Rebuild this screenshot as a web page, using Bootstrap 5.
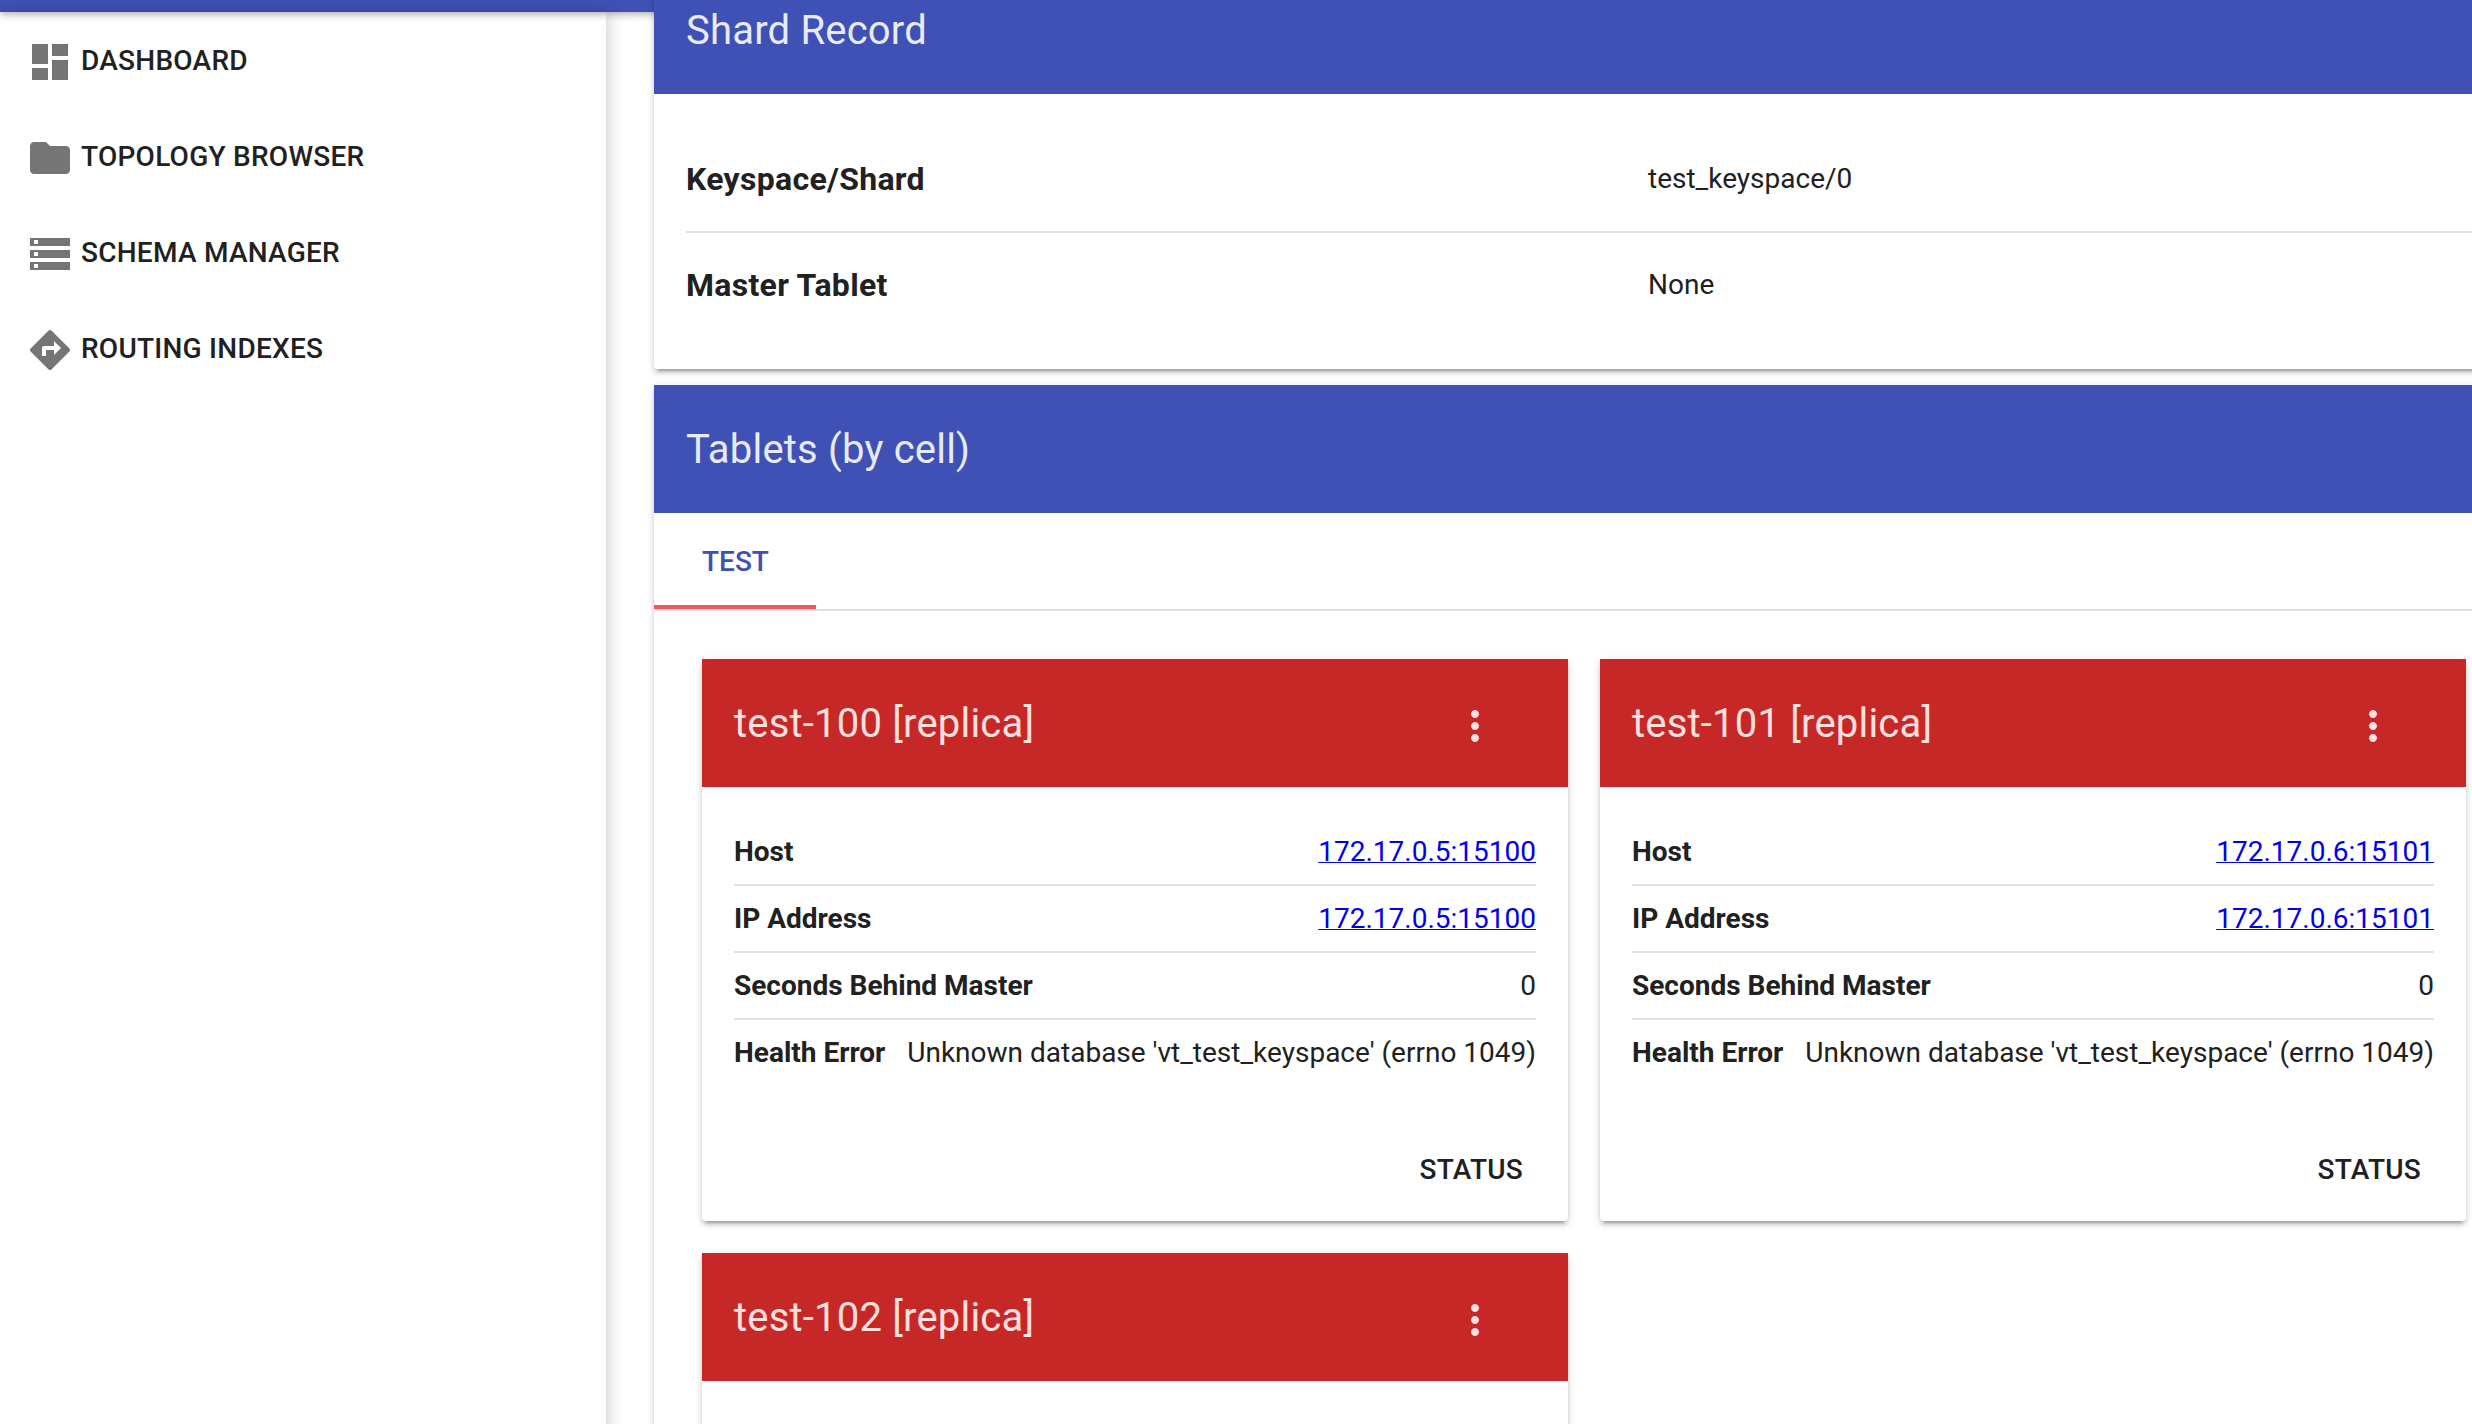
<!DOCTYPE html>
<html lang="en">
<head>
<meta charset="utf-8">
<title>Vitess - Shard</title>
<link rel="stylesheet" href="https://cdn.jsdelivr.net/npm/bootstrap@5.3.0/dist/css/bootstrap.min.css">
<style>
  body { font-family: Roboto, sans-serif; font-size: 28px; line-height: 1.2; color: #212121; background: #fff; }
  .viewport { height: 1424px; }
  .topbar { height: 12px; background: #3f51b5; box-shadow: 0 2px 8px rgba(0,0,0,.35); }
  .side { width: 606px; box-shadow: 2px 0 16px rgba(0,0,0,.2); z-index: 2; clip-path: inset(-12px -24px 0 0); }
  .side-link { height: 96px; padding: 2px 0 0 26px; color: #212121; font-weight: 500; letter-spacing: .25px; line-height: 36px; }
  .side-link:hover { color: #212121; }
  .side-link svg { width: 48px; height: 48px; margin: 2px 7px 0 0; fill: #757575; }
  .content { width: 1988px; margin-left: 48px; }
  .panel { --bs-card-border-width: 0; --bs-card-border-radius: 4px; --bs-card-inner-border-radius: 0; background: #fff; color: #212121;
    box-shadow: 0 4px 4px 0 rgba(0,0,0,.14), 0 6px 2px -4px rgba(0,0,0,.2), 0 2px 10px 0 rgba(0,0,0,.12); }
  .panel-head { height: 128px; padding: 2px 32px 0; border: 0; font-size: 40px; letter-spacing: .2px; border-radius: 0 !important; }
  .head-blue { background: #3f51b5; color: #e8eaf6; }
  .head-red { background: #c62828; color: #ffe0df; }
  .shard { margin-top: -46px; }
  .shard-body { padding: 32px 32px 31px; }
  .shard-row { height: 105px; }
  .shard-row + .shard-row { height: 107px; padding-bottom: 2px; border-top: 2px solid #e0e0e0; }
  .shard-key { padding-top: 2px; font-size: 32px; letter-spacing: .3px; }
  .cells { margin-top: 16px; }
  .tabs { height: 98px; border-bottom: 2px solid #e0e0e0; }
  .tabs .nav-link { width: 162px; height: 96px; padding: 0 0 0 48px; border-bottom: 4px solid #ea585b; color: #3f51b5; font-weight: 500; line-height: 97px; }
  .tablets { padding: 48px; gap: 32px; }
  .tablet { width: 866px; }
  .tablet-body { padding: 32px 32px 0; }
  .tablet-row { height: 67px; border-bottom: 2px solid #e0e0e0; }
  .tablet-row:last-child { height: 65px; border-bottom: 0; }
  .tablet-row a { color: #0000ee; text-decoration-thickness: 1px; }
  .menu-btn { width: 48px; height: 48px; margin: 4px 37px 0 0; }
  .menu-btn svg { fill: #ffe0df; }
  .actions { height: 136px; padding: 58px 45px 0 0; background: none; border: 0; }
  .status-btn { font-size: 28px; font-weight: 500; letter-spacing: .25px; line-height: 54px; color: #212121; border: 0; }
</style>
</head>
<body class="overflow-hidden">
<div class="viewport d-flex flex-column overflow-hidden">
  <header class="topbar flex-shrink-0 position-relative"></header>
  <div class="d-flex flex-grow-1">
    <nav class="side flex-shrink-0 position-relative nav flex-column flex-nowrap">
      <a class="side-link nav-link d-flex align-items-center" href="#"><svg viewBox="0 0 24 24"><path d="M3 13h8V3H3v10zm0 8h8v-6H3v6zm10 0h8V11h-8v10zm0-18v6h8V3h-8z"/></svg>DASHBOARD</a>
      <a class="side-link nav-link d-flex align-items-center" href="#"><svg viewBox="0 0 24 24"><path d="M10 4H4c-1.1 0-1.99.9-1.99 2L2 18c0 1.1.9 2 2 2h16c1.1 0 2-.9 2-2V8c0-1.1-.9-2-2-2h-8l-2-2z"/></svg>TOPOLOGY BROWSER</a>
      <a class="side-link nav-link d-flex align-items-center" href="#"><svg viewBox="0 0 24 24"><path d="M2 20h20v-4H2v4zm2-3h2v2H4v-2zM2 4v4h20V4H2zm4 3H4V5h2v2zm-4 7h20v-4H2v4zm2-3h2v2H4v-2z"/></svg>SCHEMA MANAGER</a>
      <a class="side-link nav-link d-flex align-items-center" href="#"><svg viewBox="0 0 24 24"><path d="M21.71 11.29l-9-9c-.39-.39-1.02-.39-1.41 0l-9 9c-.39.39-.39 1.02 0 1.41l9 9c.39.39 1.02.39 1.41 0l9-9c.39-.38.39-1.01 0-1.41zM14 14.5V12h-4v3H8v-4c0-.55.45-1 1-1h5V7.5l3.5 3.5-3.5 3.5z"/></svg>ROUTING INDEXES</a>
    </nav>
    <main class="content flex-shrink-0">
      <section class="card panel shard">
        <div class="card-header panel-head head-blue d-flex align-items-center">Shard Record</div>
        <div class="card-body shard-body">
          <div class="shard-row row g-0 align-items-center"><div class="col-6 shard-key fw-bold">Keyspace/Shard</div><div class="col-6">test_keyspace/0</div></div>
          <div class="shard-row row g-0 align-items-center"><div class="col-6 shard-key fw-bold">Master Tablet</div><div class="col-6">None</div></div>
        </div>
      </section>
      <section class="card panel cells">
        <div class="card-header panel-head head-blue d-flex align-items-center">Tablets (by cell)</div>
        <ul class="nav tabs"><li class="nav-item"><a class="nav-link active" href="#">TEST</a></li></ul>
        <div class="tablets d-flex flex-wrap">
          <article class="card panel tablet">
            <div class="card-header panel-head head-red d-flex align-items-center justify-content-between"><span>test-100 [replica]</span><button class="btn p-0 border-0 menu-btn" aria-label="Menu"><svg class="d-block" width="48" height="48" viewBox="0 0 24 24"><path d="M12 8c1.1 0 2-.9 2-2s-.9-2-2-2-2 .9-2 2 .9 2 2 2zm0 2c-1.1 0-2 .9-2 2s.9 2 2 2 2-.9 2-2-.9-2-2-2zm0 6c-1.1 0-2 .9-2 2s.9 2 2 2 2-.9 2-2-.9-2-2-2z"/></svg></button></div>
            <div class="card-body tablet-body">
              <div class="tablet-row d-flex align-items-center justify-content-between"><b>Host</b><a href="#">172.17.0.5:15100</a></div>
              <div class="tablet-row d-flex align-items-center justify-content-between"><b>IP Address</b><a href="#">172.17.0.5:15100</a></div>
              <div class="tablet-row d-flex align-items-center justify-content-between"><b>Seconds Behind Master</b><span>0</span></div>
              <div class="tablet-row d-flex align-items-center justify-content-between"><b>Health Error</b><span>Unknown database 'vt_test_keyspace' (errno 1049)</span></div>
            </div>
            <div class="card-footer actions d-flex justify-content-end align-items-start"><button class="btn p-0 status-btn">STATUS</button></div>
          </article>
          <article class="card panel tablet">
            <div class="card-header panel-head head-red d-flex align-items-center justify-content-between"><span>test-101 [replica]</span><button class="btn p-0 border-0 menu-btn" aria-label="Menu"><svg class="d-block" width="48" height="48" viewBox="0 0 24 24"><path d="M12 8c1.1 0 2-.9 2-2s-.9-2-2-2-2 .9-2 2 .9 2 2 2zm0 2c-1.1 0-2 .9-2 2s.9 2 2 2 2-.9 2-2-.9-2-2-2zm0 6c-1.1 0-2 .9-2 2s.9 2 2 2 2-.9 2-2-.9-2-2-2z"/></svg></button></div>
            <div class="card-body tablet-body">
              <div class="tablet-row d-flex align-items-center justify-content-between"><b>Host</b><a href="#">172.17.0.6:15101</a></div>
              <div class="tablet-row d-flex align-items-center justify-content-between"><b>IP Address</b><a href="#">172.17.0.6:15101</a></div>
              <div class="tablet-row d-flex align-items-center justify-content-between"><b>Seconds Behind Master</b><span>0</span></div>
              <div class="tablet-row d-flex align-items-center justify-content-between"><b>Health Error</b><span>Unknown database 'vt_test_keyspace' (errno 1049)</span></div>
            </div>
            <div class="card-footer actions d-flex justify-content-end align-items-start"><button class="btn p-0 status-btn">STATUS</button></div>
          </article>
          <article class="card panel tablet">
            <div class="card-header panel-head head-red d-flex align-items-center justify-content-between"><span>test-102 [replica]</span><button class="btn p-0 border-0 menu-btn" aria-label="Menu"><svg class="d-block" width="48" height="48" viewBox="0 0 24 24"><path d="M12 8c1.1 0 2-.9 2-2s-.9-2-2-2-2 .9-2 2 .9 2 2 2zm0 2c-1.1 0-2 .9-2 2s.9 2 2 2 2-.9 2-2-.9-2-2-2zm0 6c-1.1 0-2 .9-2 2s.9 2 2 2 2-.9 2-2-.9-2-2-2z"/></svg></button></div>
            <div class="card-body tablet-body"></div>
            <div class="card-footer actions"></div>
          </article>
        </div>
      </section>
    </main>
  </div>
</div>
<script src="https://cdn.jsdelivr.net/npm/bootstrap@5.3.0/dist/js/bootstrap.bundle.min.js"></script>
</body>
</html>
